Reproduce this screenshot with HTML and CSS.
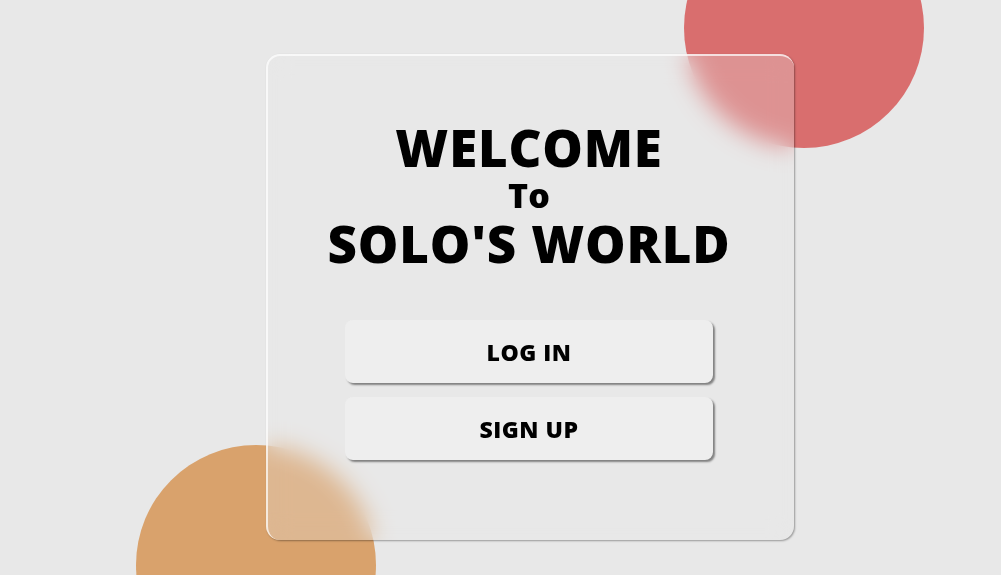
FILE: index.html
```html
<!DOCTYPE html>
<html>
<head>
<meta charset="utf-8">
<link rel="stylesheet" href="styles.css">
</head>
<body>
<div class="scene">
  <div class="circle circle-red"></div>
  <div class="circle circle-orange"></div>
  <div class="card">
    <h1 class="title">
      <span class="t-big">WELCOME</span>
      <span class="t-small">To</span>
      <span class="t-big">SOLO'S WORLD</span>
    </h1>
    <div class="actions">
      <button class="btn">LOG IN</button>
      <button class="btn">SIGN UP</button>
    </div>
  </div>
</div>
</body>
</html>
```

FILE: styles.css
```css
html, body {
  margin: 0;
  padding: 0;
}
body {
  background: #e8e8e8;
  font-family: "Open Sans", "Liberation Sans", sans-serif;
  overflow: hidden;
}
.scene {
  position: relative;
  width: 1001px;
  height: 575px;
  padding: 54px 0 0 266px;
  box-sizing: border-box;
  overflow: hidden;
}
.circle {
  position: absolute;
  width: 240px;
  height: 240px;
  border-radius: 50%;
}
.circle-red {
  left: 684px;
  top: -92px;
  background: #d96e6e;
}
.circle-orange {
  left: 136px;
  top: 445px;
  background: #d9a26c;
}
.card {
  position: relative;
  width: 528px;
  height: 486px;
  box-sizing: border-box;
  padding-right: 4px;
  border-radius: 14px;
  background: rgba(232, 232, 232, 0.3);
  backdrop-filter: blur(12px);
  -webkit-backdrop-filter: blur(12px);
  border-top: 2px solid rgba(255, 255, 255, 0.7);
  border-left: 2px solid rgba(255, 255, 255, 0.7);
  box-shadow: 1px 1px 2px rgba(0, 0, 0, 0.35);
  display: flex;
  flex-direction: column;
  align-items: center;
}
.title {
  margin: 65px 0 0 0;
  display: flex;
  flex-direction: column;
  align-items: center;
  font-weight: 800;
  color: #000;
  line-height: 1;
}
.t-big {
  font-size: 51px;
  letter-spacing: 0.8px;
  line-height: 52px;
}
.t-small {
  font-size: 34px;
  line-height: 44px;
}
.actions {
  margin-top: 51px;
  display: flex;
  flex-direction: column;
  gap: 14px;
}
.btn {
  width: 368px;
  height: 63px;
  border: none;
  border-radius: 8px;
  background: #eeeeee;
  box-shadow: 2px 2px 2px rgba(0, 0, 0, 0.45);
  font-family: "Open Sans", "Liberation Sans", sans-serif;
  font-weight: 800;
  font-size: 23px;
  letter-spacing: 0.5px;
  color: #000;
  cursor: pointer;
}
```
